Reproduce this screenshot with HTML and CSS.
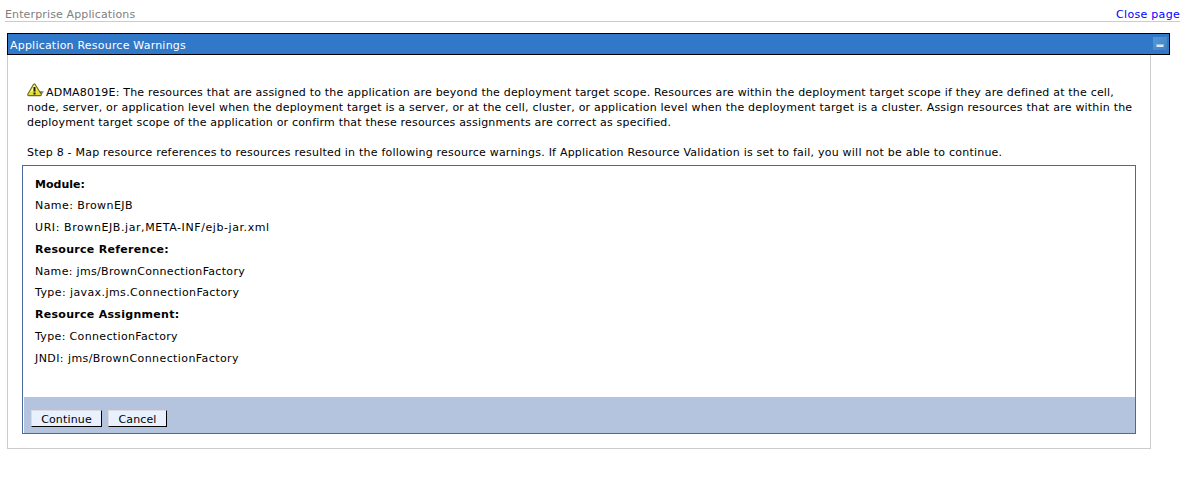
FILE: index.html
```html
<!DOCTYPE html>
<html lang="en">
<head>
<meta charset="utf-8">
<title>Enterprise Applications</title>
<link rel="stylesheet" href="styles.css">
</head>
<body>
<header class="page-head"><span class="crumb">Enterprise Applications</span><a class="close" href="#">Close page</a></header>
<main class="portlet">
  <div class="titlebar">
    <h1 class="title">Application Resource Warnings</h1>
    <svg class="minimize" width="14" height="13" viewBox="0 0 14 13">
      <defs><linearGradient id="face" x1="0" y1="0" x2="1" y2="1"><stop offset="0" stop-color="#5798d8"/><stop offset="1" stop-color="#4080bd"/></linearGradient></defs>
      <rect width="14" height="13" fill="url(#face)"/>
      <rect x="3" y="7" width="8" height="3" fill="#8fbce8"/>
      <rect x="4" y="8" width="6" height="2" fill="#d9ebfa"/>
    </svg>
  </div>
  <div class="content">
    <div class="message">
      <div class="line first"><svg class="warning" width="18" height="15" viewBox="0 0 18 15">
        <path d="M12 8 17 8.5 14 12z" fill="#777"/>
        <path d="M8 1.2 14.3 11.2Q14.6 12.6 13.2 12.6H1.8Q.4 12.6 .8 11.2L6.4 1.5Q7.2.5 8 1.2z" fill="#e3df3c" stroke="#6b6b22" stroke-width="1.1"/>
        <path d="M7.2 2.5 3 9.6Q4 8 10 7L7.8 2.5z" fill="#ffff9c"/>
        <path d="M6.5 4h2v4.5h-2zM6.5 9.6h2v1.8h-2z" fill="#171700"/>
      </svg><span class="l1">ADMA8019E: The resources that are assigned to the application are beyond the deployment target scope. Resources are within the deployment target scope if they are defined at the cell,</span></div>
      <div class="line"><span class="l2">node, server, or application level when the deployment target is a server, or at the cell, cluster, or application level when the deployment target is a cluster. Assign resources that are within the</span></div>
      <div class="line"><span class="l3">deployment target scope of the application or confirm that these resources assignments are correct as specified.</span></div>
      <div class="line step"><span class="l4">Step 8 - Map resource references to resources resulted in the following resource warnings. If Application Resource Validation is set to fail, you will not be able to continue.</span></div>
    </div>
    <section class="panel">
      <div class="details">
        <div class="row heading">Module:</div>
        <div class="row module-name">Name: BrownEJB</div>
        <div class="row module-uri">URI: BrownEJB.jar,META-INF/ejb-jar.xml</div>
        <div class="row heading spaced">Resource Reference:</div>
        <div class="row ref-name">Name: jms/BrownConnectionFactory</div>
        <div class="row ref-type">Type: javax.jms.ConnectionFactory</div>
        <div class="row heading spaced">Resource Assignment:</div>
        <div class="row assign-type">Type: ConnectionFactory</div>
        <div class="row assign-jndi">JNDI: jms/BrownConnectionFactory</div>
      </div>
      <div class="actions"><button class="button continue">Continue</button><button class="button cancel">Cancel</button></div>
    </section>
  </div>
</main>
</body>
</html>
```
FILE: styles.css
```css
* { box-sizing: border-box; }
body { margin: 0; background: #fff; color: #000; font: 11px/15px Verdana, "DejaVu Sans", sans-serif; }
.page-head { display: flex; justify-content: space-between; align-items: flex-start; height: 22px; padding-top: 7px; margin: 0 12px 0 5px; border-bottom: 1px solid #ccc; color: #808080; }
.crumb { letter-spacing: .13px; }
.close { color: #00f; text-decoration: none; letter-spacing: .3px; }
.portlet { width: 1163px; margin: 11px 0 0 7px; }
.titlebar { display: flex; justify-content: space-between; align-items: center; height: 22px; padding: 0 2px; border: 1px solid #000; background: #3178c8; color: #fff; }
.title { margin: 2px 0 0; font-size: 11px; font-weight: 400; line-height: 15px; letter-spacing: .21px; }
.minimize { display: block; margin-top: -1px; }
.content { width: 1144px; height: 394px; padding: 30px 14px 0; border: 1px solid #ccc; border-top: 0; }
.message { padding-left: 5px; height: 80px; }
.line { display: flex; height: 15px; white-space: nowrap; }
.warning { flex: none; margin: -2px 1px 0 0; }
.l1 { letter-spacing: .191px; }
.l2 { letter-spacing: .203px; }
.l3 { letter-spacing: .183px; }
.l4 { letter-spacing: .22px; }
.step { margin-top: 15px; }
.panel { display: flex; flex-direction: column; justify-content: space-between; width: 1114px; height: 269px; border: 1px solid #4a6a9e; }
.details { padding: 7.5px 12px 0; }
.row { height: 21.75px; line-height: 22px; white-space: nowrap; }
.heading { font-weight: 700; }
.spaced { letter-spacing: .29px; }
.module-name { letter-spacing: .43px; }
.module-uri { letter-spacing: .58px; }
.ref-name { letter-spacing: .32px; }
.ref-type { letter-spacing: .41px; }
.assign-type { letter-spacing: .35px; }
.assign-jndi { letter-spacing: .42px; }
.actions { display: flex; gap: 6px; height: 36px; margin-left: 1px; padding: 13px 0 0 7px; background: #b5c4de; }
.button { height: 17px; padding: 1px 0 0; border: 1px solid #000; border-top-color: #dcdcdc; border-left-color: #dcdcdc; background: #e9f0ff; color: #000; font: inherit; line-height: 15px; letter-spacing: .15px; }
.continue { width: 71px; }
.cancel { width: 59px; }
```
